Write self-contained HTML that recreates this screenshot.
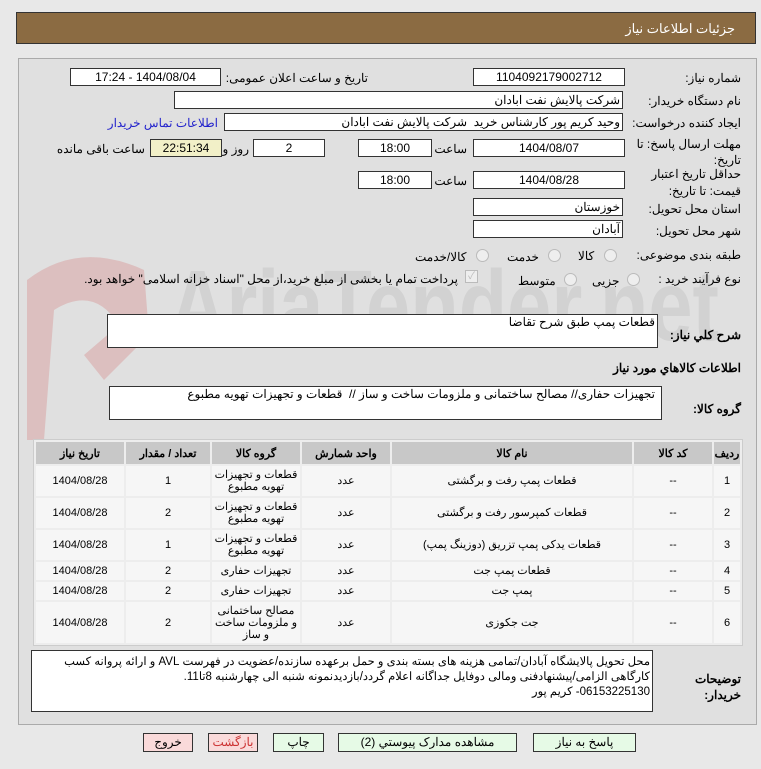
<!DOCTYPE html>
<html><head><meta charset="utf-8"><style>
body{margin:0;width:761px;height:769px;background:#e8e8e8;font-family:Tahoma,"Liberation Sans","Noto Sans CJK SC",sans-serif;font-size:12px;color:#000;position:relative;overflow:hidden;direction:rtl}
.a{position:absolute;white-space:nowrap}
.hdr{left:16px;top:12px;width:738px;height:30px;background:#8b6b42;border:1px solid #333}
.hdr span{position:absolute;right:20px;top:8px;color:#fff;font-size:13px}
.panel{left:18px;top:58px;width:737px;height:665px;background:#e0e0e0;border:1px solid #aaa}
.box{position:absolute;background:#fff;border:1px solid #333;height:16px;line-height:16px;text-align:center;font-size:12px}
.lbl{position:absolute;font-size:12px;white-space:nowrap}
.radio{position:absolute;width:11px;height:11px;border-radius:50%;border:1px solid #bbb;background:#eee}
table{position:absolute;left:33px;top:439px;width:710px;border-collapse:separate;border-spacing:2px;background:#ededed;border:1px solid #ccc;font-size:11px}
th{background:#c8c8c8;height:22px;font-weight:bold;padding:0}
td{background:#f6f6f6;text-align:center;line-height:12px;padding:0}
.btn{position:absolute;top:733px;height:17px;border:1px solid #333;line-height:17px;text-align:center;font-size:12px}
</style></head><body>
<div class="a hdr"><span>جزئیات اطلاعات نیاز</span></div>
<div class="a panel"></div>
<svg class="a" style="left:19px;top:240px" width="730" height="200" direction="ltr"><g fill="#d9a8a8" opacity="0.6"><path d="M8 40 Q60 0 125 30 L130 95 L85 140 L65 115 L100 85 Q75 45 35 70 L25 200 L8 200Z"/></g><text x="150" y="100" font-size="100" font-weight="bold" fill="#d2d2d2" font-family="Liberation Sans" textLength="550" lengthAdjust="spacingAndGlyphs">AriaTender.net</text></svg>

<div class="lbl" style="right:20px;top:71px">شماره نیاز:</div>
<div class="box" style="left:473px;top:68px;width:150px">1104092179002712</div>
<div class="lbl" style="right:393px;top:71px">تاریخ و ساعت اعلان عمومی:</div>
<div class="box" style="left:70px;top:68px;width:149px">1404/08/04 - 17:24</div>

<div class="lbl" style="right:20px;top:94px">نام دستگاه خریدار:</div>
<div class="box" style="left:174px;top:91px;width:449px;text-align:right;padding-right:2px;box-sizing:border-box;height:18px">شرکت پالایش نفت ابادان</div>

<div class="lbl" style="right:20px;top:116px">ایجاد کننده درخواست:</div>
<div class="box" style="left:224px;top:113px;width:399px;text-align:right;padding-right:2px;box-sizing:border-box;height:18px">وحید کریم پور کارشناس خرید &nbsp;شرکت پالایش نفت ابادان</div>
<div class="lbl" style="right:543px;top:116px;color:#2222cc">اطلاعات تماس خریدار</div>

<div class="lbl" style="right:20px;top:136px;line-height:16px">مهلت ارسال پاسخ: تا<br>تاریخ:</div>
<div class="box" style="left:473px;top:139px;width:150px">1404/08/07</div>
<div class="lbl" style="right:294px;top:142px">ساعت</div>
<div class="box" style="left:358px;top:139px;width:72px">18:00</div>
<div class="box" style="left:253px;top:139px;width:70px">2</div>
<div class="lbl" style="right:512px;top:142px">روز و</div>
<div class="box" style="left:150px;top:139px;width:70px;background:#f2f0c8">22:51:34</div>
<div class="lbl" style="right:616px;top:142px">ساعت باقی مانده</div>

<div class="lbl" style="right:20px;top:166px;line-height:17px">حداقل تاریخ اعتبار<br>قیمت: تا تاریخ:</div>
<div class="box" style="left:473px;top:171px;width:150px">1404/08/28</div>
<div class="lbl" style="right:294px;top:174px">ساعت</div>
<div class="box" style="left:358px;top:171px;width:72px">18:00</div>

<div class="lbl" style="right:20px;top:202px">استان محل تحویل:</div>
<div class="box" style="left:473px;top:198px;width:150px;text-align:right;padding-right:2px;box-sizing:border-box;height:18px">خوزستان</div>
<div class="lbl" style="right:20px;top:224px">شهر محل تحویل:</div>
<div class="box" style="left:473px;top:220px;width:150px;text-align:right;padding-right:2px;box-sizing:border-box;height:18px">آبادان</div>

<div class="lbl" style="right:20px;top:248px">طبقه بندی موضوعی:</div>
<div class="radio" style="left:604px;top:249px"></div><div class="lbl" style="left:578px;top:249px">کالا</div>
<div class="radio" style="left:548px;top:249px"></div><div class="lbl" style="left:507px;top:250px">خدمت</div>
<div class="radio" style="left:476px;top:249px"></div><div class="lbl" style="left:415px;top:250px">کالا/خدمت</div>

<div class="lbl" style="right:20px;top:272px">نوع فرآیند خرید :</div>
<div class="radio" style="left:627px;top:273px"></div>
<div class="lbl" style="left:592px;top:274px">جزیی</div>
<div class="radio" style="left:564px;top:273px"></div>
<div class="lbl" style="left:518px;top:274px">متوسط</div>
<div class="a" style="left:465px;top:270px;width:11px;height:11px;border:1px solid #bbb;background:#eee;font-size:10px;color:#bbb;line-height:11px;text-align:center">✓</div>
<div class="lbl" style="right:303px;top:272px">پرداخت تمام یا بخشی از مبلغ خرید،از محل "اسناد خزانه اسلامی" خواهد بود.</div>

<div class="lbl" style="right:20px;top:328px;font-weight:bold">شرح کلي نیاز:</div>
<div class="a" style="left:107px;top:314px;width:547px;height:32px;background:#fff;border:1px solid #333;text-align:right;padding-right:2px">قطعات پمپ طبق شرح تقاضا</div>
<div class="lbl" style="right:20px;top:361px;font-weight:bold">اطلاعات کالاهاي مورد نیاز</div>
<div class="lbl" style="right:20px;top:402px;font-weight:bold">گروه کالا:</div>
<div class="a" style="left:109px;top:386px;width:545px;height:32px;background:#fff;border:1px solid #333;text-align:right;padding-right:6px">تجهیزات حفاری// مصالح ساختمانی و ملزومات ساخت و ساز // &nbsp;قطعات و تجهیزات تهویه مطبوع</div>

<table>
<tr><th style="width:26px">ردیف</th><th style="width:78px">کد کالا</th><th style="width:240px">نام کالا</th><th style="width:88px">واحد شمارش</th><th style="width:88px">گروه کالا</th><th style="width:84px">تعداد / مقدار</th><th>تاریخ نیاز</th></tr>
<tr style="height:30px"><td>1</td><td>--</td><td>قطعات پمپ رفت و برگشتی</td><td>عدد</td><td>قطعات و تجهیزات<br>تهویه مطبوع</td><td>1</td><td>1404/08/28</td></tr>
<tr style="height:30px"><td>2</td><td>--</td><td>قطعات کمپرسور رفت و برگشتی</td><td>عدد</td><td>قطعات و تجهیزات<br>تهویه مطبوع</td><td>2</td><td>1404/08/28</td></tr>
<tr style="height:30px"><td>3</td><td>--</td><td>قطعات یدکی پمپ تزریق (دوزینگ پمپ)</td><td>عدد</td><td>قطعات و تجهیزات<br>تهویه مطبوع</td><td>1</td><td>1404/08/28</td></tr>
<tr style="height:18px"><td>4</td><td>--</td><td>قطعات پمپ جت</td><td>عدد</td><td>تجهیزات حفاری</td><td>2</td><td>1404/08/28</td></tr>
<tr style="height:18px"><td>5</td><td>--</td><td>پمپ جت</td><td>عدد</td><td>تجهیزات حفاری</td><td>2</td><td>1404/08/28</td></tr>
<tr style="height:41px"><td>6</td><td>--</td><td>جت جکوزی</td><td>عدد</td><td>مصالح ساختمانی<br>و ملزومات ساخت<br>و ساز</td><td>2</td><td>1404/08/28</td></tr>
</table>

<div class="lbl" style="right:20px;top:671px;font-weight:bold;line-height:16px">توضیحات<br>خریدار:</div>
<div class="a" style="left:31px;top:650px;width:618px;height:56px;background:#fff;border:1px solid #333;text-align:right;padding-right:2px;white-space:normal;line-height:15px;padding-top:4px;font-size:11.5px">محل تحویل پالایشگاه آبادان/تمامی هزینه های بسته بندی و حمل برعهده سازنده/عضویت در فهرست AVL و ارائه پروانه کسب کارگاهی الزامی/پیشنهادفنی ومالی دوفایل جداگانه اعلام گردد/بازدیدنمونه شنبه الی چهارشنبه 8تا11.<br>06153225130- کریم پور</div>

<div class="btn" style="left:533px;width:101px;background:#e6fae6">پاسخ به نیاز</div>
<div class="btn" style="left:338px;width:177px;background:#e6fae6">مشاهده مدارک پیوستي (2)</div>
<div class="btn" style="left:273px;width:49px;background:#e6fae6">چاپ</div>
<div class="btn" style="left:208px;width:48px;background:#fadada;color:#c33">بازگشت</div>
<div class="btn" style="left:143px;width:48px;background:#fadada">خروج</div>
</body></html>
